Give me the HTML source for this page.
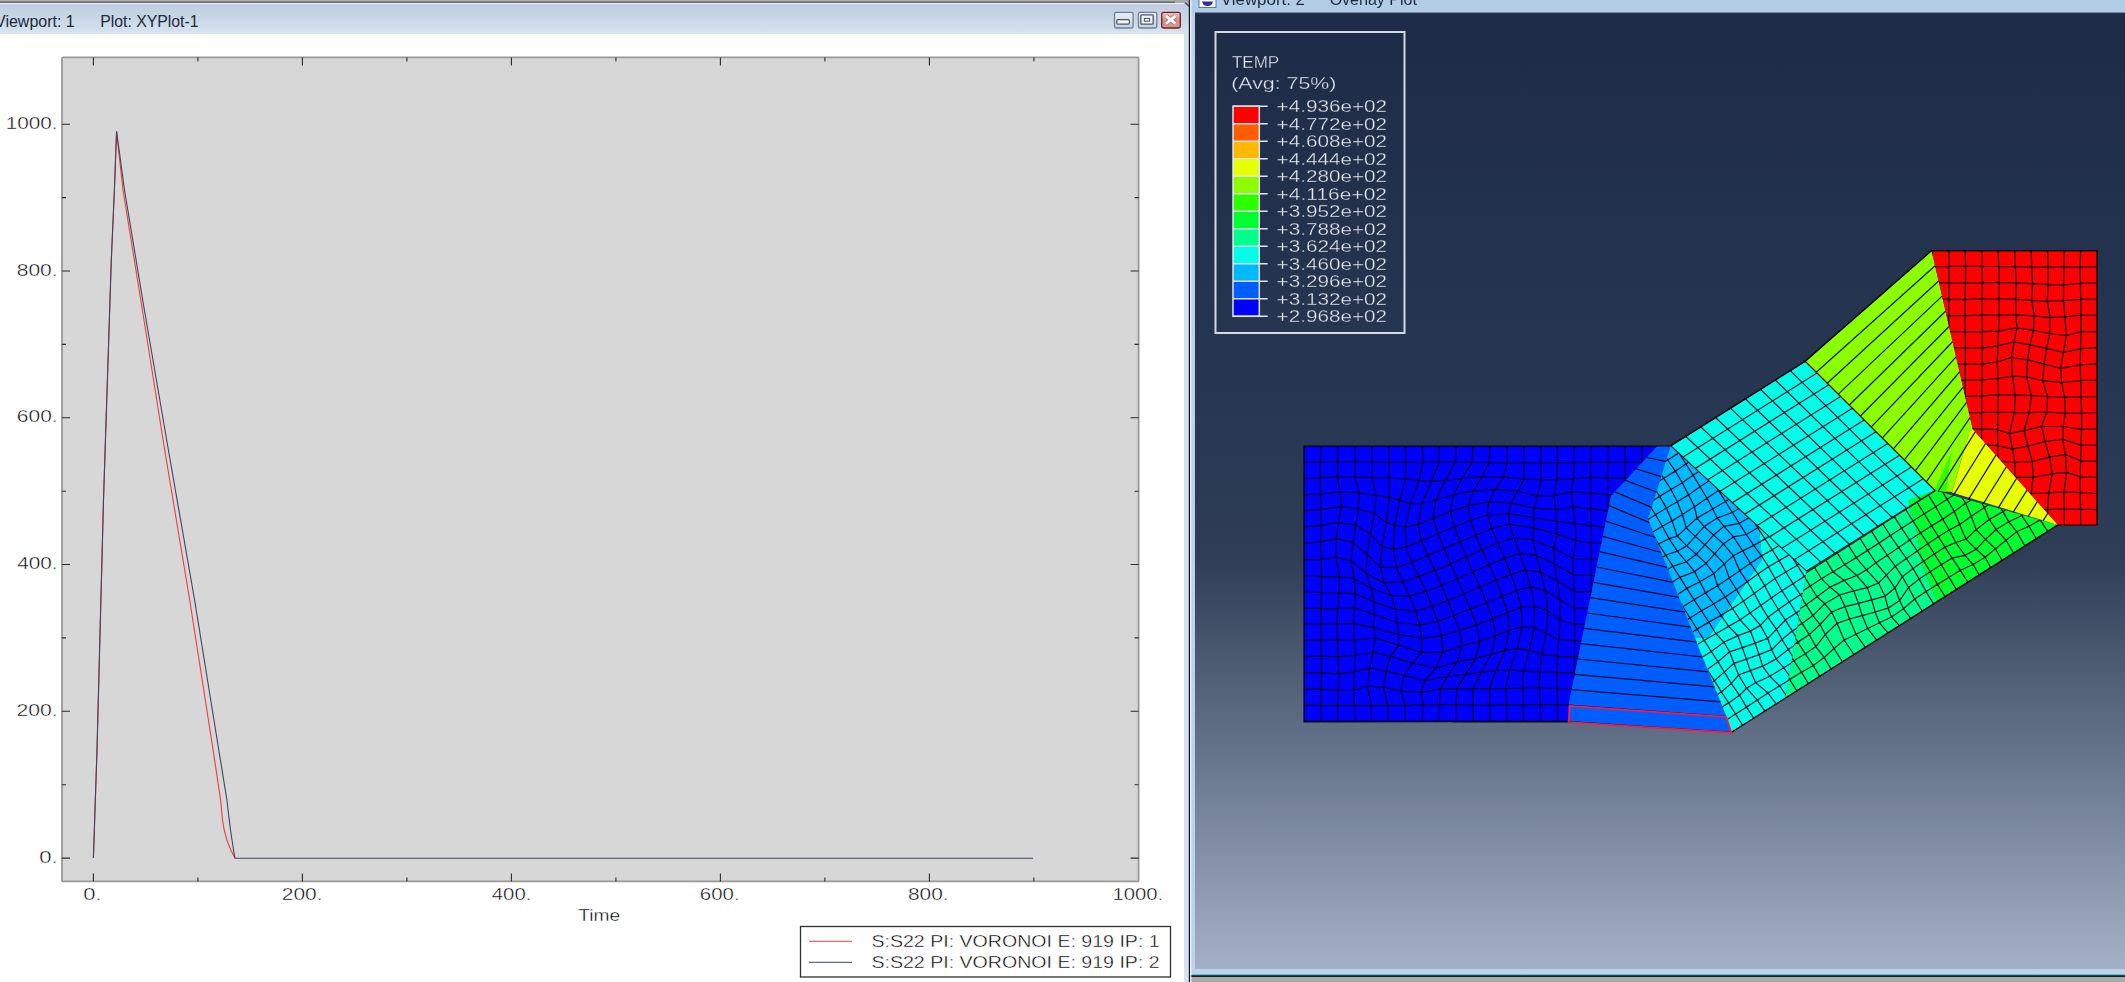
<!DOCTYPE html><html><head><meta charset="utf-8"><style>html,body{margin:0;padding:0;width:2125px;height:982px;overflow:hidden;background:#aaaaaa}svg{position:absolute;left:0;top:0}</style></head><body>
<svg width="2125" height="982" viewBox="0 0 2125 982" style="font-family:'Liberation Sans',sans-serif">
<defs>
<linearGradient id="tb1" gradientUnits="userSpaceOnUse" x1="0" y1="3" x2="0" y2="34"><stop offset="0" stop-color="#bfcde0"/><stop offset="0.5" stop-color="#c8d6e6"/><stop offset="1" stop-color="#d8e4f1"/></linearGradient>
<linearGradient id="vpg" gradientUnits="userSpaceOnUse" x1="0" y1="13" x2="0" y2="969">
<stop offset="0" stop-color="#1d2b46"/><stop offset="0.45" stop-color="#2a3953"/><stop offset="0.57" stop-color="#2f3d56"/><stop offset="1" stop-color="#a3b0c6"/></linearGradient>
<linearGradient id="btnb" x1="0" y1="0" x2="0" y2="1"><stop offset="0" stop-color="#e8eef6"/><stop offset="1" stop-color="#c4d2e2"/></linearGradient>
<linearGradient id="btnr" x1="0" y1="0" x2="0" y2="1"><stop offset="0" stop-color="#eec4c0"/><stop offset="0.5" stop-color="#d89088"/><stop offset="1" stop-color="#d6988e"/></linearGradient>
</defs>
<rect x="0" y="0" width="1190" height="982" fill="#ffffff"/>
<rect x="0" y="0" width="1190" height="3" fill="#b0b0b0"/><rect x="0" y="1.4" width="1186" height="1.6" fill="#686c72"/>
<rect x="1175" y="0" width="15" height="14" fill="#a8a8a8"/>
<path d="M0,3 H1185.5 L1189,6.5 V982 H0 Z" fill="url(#tb1)"/>
<rect x="0" y="3" width="1184" height="1" fill="#eaf0f4"/>
<rect x="1184" y="34" width="5" height="948" fill="#d6e2ef"/>
<rect x="0" y="34" width="1184" height="948" fill="#ffffff"/>
<path d="M1185.2,2.6 L1189,6.4" fill="none" stroke="#3a3f46" stroke-width="1.3"/>
<rect x="1188.8" y="0" width="1.4" height="982" fill="#1a1a1a"/>
<text x="-5" y="26.6" font-size="16" fill="#1e2a3a">Viewport: 1</text>
<text x="100.18" y="26.60" font-size="15.6" fill="#1e2a3a" textLength="98.40" lengthAdjust="spacingAndGlyphs">Plot: XYPlot-1</text>
<rect x="1114.5" y="12.3" width="18.6" height="15.7" rx="1.8" fill="url(#btnb)" stroke="#6f8096" stroke-width="1.3"/>
<rect x="1116.8" y="19.6" width="12.6" height="4.6" rx="1.2" fill="#f2f2f2" stroke="#4a5566" stroke-width="1.2"/>
<rect x="1138.4" y="12.3" width="18.4" height="15.7" rx="1.8" fill="url(#btnb)" stroke="#6f8096" stroke-width="1.3"/>
<rect x="1140.8" y="14.8" width="12.4" height="9.4" rx="1" fill="#f2f2f2" stroke="#4a5566" stroke-width="1.3"/>
<rect x="1144.4" y="18.4" width="5.2" height="2.8" fill="none" stroke="#4a5566" stroke-width="1"/>
<rect x="1161.7" y="12.3" width="18.6" height="15.7" rx="1.8" fill="url(#btnr)" stroke="#6a2424" stroke-width="1.3"/>
<path d="M1166,16 L1175.5,23.6 M1175.5,16 L1166,23.6" stroke="#5a2a2a" stroke-width="4.2" stroke-linecap="butt" opacity="0.45"/><path d="M1166,16 L1175.5,23.6 M1175.5,16 L1166,23.6" stroke="#fbf8f6" stroke-width="2.9" stroke-linecap="butt"/>
<rect x="62" y="57.4" width="1076.6" height="824.0" fill="#d7d7d7" stroke="#999999" stroke-width="1.8" rx="1"/>
<path d="M93.4,57.4 v8 M93.4,881.4 v-8 M197.9,57.4 v4 M197.9,881.4 v-4 M302.4,57.4 v8 M302.4,881.4 v-8 M406.9,57.4 v4 M406.9,881.4 v-4 M511.4,57.4 v8 M511.4,881.4 v-8 M615.9,57.4 v4 M615.9,881.4 v-4 M720.4,57.4 v8 M720.4,881.4 v-8 M824.9,57.4 v4 M824.9,881.4 v-4 M929.4,57.4 v8 M929.4,881.4 v-8 M1033.9,57.4 v4 M1033.9,881.4 v-4 M62,858.1 h8 M1138.6,858.1 h-8 M62,784.7 h4 M1138.6,784.7 h-4 M62,711.3 h8 M1138.6,711.3 h-8 M62,637.9 h4 M1138.6,637.9 h-4 M62,564.5 h8 M1138.6,564.5 h-8 M62,491.2 h4 M1138.6,491.2 h-4 M62,417.8 h8 M1138.6,417.8 h-8 M62,344.4 h4 M1138.6,344.4 h-4 M62,271.0 h8 M1138.6,271.0 h-8 M62,197.6 h4 M1138.6,197.6 h-4 M62,124.2 h8 M1138.6,124.2 h-8" stroke="#2a2a2a" stroke-width="1.1" fill="none"/>
<text x="83.30" y="899.80" font-size="17" fill="#000000" stroke="#ffffff" stroke-width="0.4" textLength="18.32" lengthAdjust="spacingAndGlyphs">0.</text>
<text x="39.18" y="862.70" font-size="17" fill="#000000" stroke="#ffffff" stroke-width="0.4" textLength="18.44" lengthAdjust="spacingAndGlyphs">0.</text>
<text x="281.74" y="899.80" font-size="17" fill="#000000" stroke="#ffffff" stroke-width="0.4" textLength="40.86" lengthAdjust="spacingAndGlyphs">200.</text>
<text x="16.40" y="715.92" font-size="17" fill="#000000" stroke="#ffffff" stroke-width="0.4" textLength="41.22" lengthAdjust="spacingAndGlyphs">200.</text>
<text x="491.76" y="899.80" font-size="17" fill="#000000" stroke="#ffffff" stroke-width="0.4" textLength="39.62" lengthAdjust="spacingAndGlyphs">400.</text>
<text x="17.20" y="569.14" font-size="17" fill="#000000" stroke="#ffffff" stroke-width="0.4" textLength="40.42" lengthAdjust="spacingAndGlyphs">400.</text>
<text x="699.86" y="899.80" font-size="17" fill="#000000" stroke="#ffffff" stroke-width="0.4" textLength="39.74" lengthAdjust="spacingAndGlyphs">600.</text>
<text x="16.86" y="422.36" font-size="17" fill="#000000" stroke="#ffffff" stroke-width="0.4" textLength="40.76" lengthAdjust="spacingAndGlyphs">600.</text>
<text x="907.96" y="899.80" font-size="17" fill="#000000" stroke="#ffffff" stroke-width="0.4" textLength="40.64" lengthAdjust="spacingAndGlyphs">800.</text>
<text x="16.74" y="275.58" font-size="17" fill="#000000" stroke="#ffffff" stroke-width="0.4" textLength="40.88" lengthAdjust="spacingAndGlyphs">800.</text>
<text x="1112.40" y="899.80" font-size="17" fill="#000000" stroke="#ffffff" stroke-width="0.4" textLength="50.76" lengthAdjust="spacingAndGlyphs">1000.</text>
<text x="5.72" y="128.80" font-size="17" fill="#000000" stroke="#ffffff" stroke-width="0.4" textLength="51.90" lengthAdjust="spacingAndGlyphs">1000.</text>
<text x="578.32" y="920.80" font-size="17" fill="#000000" stroke="#ffffff" stroke-width="0.4" textLength="41.82" lengthAdjust="spacingAndGlyphs">Time</text>
<path d="M93.4,858.1 L97,750 L103.5,500 L111.3,260 L114.4,190 L116.5,131.4 L123.0,190 L140.8,300 L164.7,450 L189.7,600 L213.1,750 L220.6,800 L222.5,820 L224.2,830 L226.9,840 L230.8,850 L234.8,857.8" fill="none" stroke="#f23a3a" stroke-width="1.1"/>
<path d="M93.4,858.1 L97,750 L103.5,500 L111.3,260 L114.4,190 L116.6,131.4 L124.5,190 L142.7,300 L168.4,450 L194.6,600 L218.8,750 L226.9,800 L230.5,830 L233.5,850 L235,858.2 L1033,858.2" fill="none" stroke="#3e4660" stroke-width="1.1"/>
<rect x="800.5" y="926.5" width="370" height="50.5" fill="#ffffff" stroke="#303030" stroke-width="1.3"/>
<path d="M809,941.3 H852" stroke="#ff6060" stroke-width="1.2"/>
<path d="M809,962.3 H852" stroke="#606a80" stroke-width="1.2"/>
<text x="871.40" y="946.80" font-size="17" fill="#000000" stroke="#ffffff" stroke-width="0.4" textLength="288.30" lengthAdjust="spacingAndGlyphs">S:S22 PI: VORONOI E: 919 IP: 1</text>
<text x="871.40" y="968.00" font-size="17" fill="#000000" stroke="#ffffff" stroke-width="0.4" textLength="288.30" lengthAdjust="spacingAndGlyphs">S:S22 PI: VORONOI E: 919 IP: 2</text>
<rect x="1190" y="0" width="935" height="982" fill="#bcd1ea"/>
<rect x="1190" y="0" width="935" height="13" fill="#b3cce5"/>
<rect x="1195" y="12.6" width="930" height="1.2" fill="#12203a"/>
<rect x="1195" y="13.4" width="930" height="955.6" fill="url(#vpg)"/>
<rect x="1190" y="974" width="935" height="1.2" fill="#5ec4d6"/>
<rect x="1190" y="975.2" width="935" height="1.8" fill="#0c2424"/>
<rect x="1190" y="977" width="935" height="5" fill="#aaaaaa"/>
<rect x="1190.2" y="0" width="1.2" height="982" fill="#eef4fa"/>
<defs><filter id="mblur" x="1195" y="13" width="930" height="956" filterUnits="userSpaceOnUse"><feGaussianBlur stdDeviation="0.45"/></filter><clipPath id="c1"><polygon points="1304.0,446.0 1657.5,446.0 1611.0,496.0 1568.6,705.0 1568.6,722.0 1304.0,722.0"/></clipPath><clipPath id="c2"><polygon points="1670.7,445.6 1806.6,571.1 1785.5,698.0 1731.5,732.4 1726.6,716.7 1648.0,519.0"/></clipPath><clipPath id="c3"><polygon points="1806.6,571.1 1935.0,490.5 2058.0,525.0 1785.5,698.0"/></clipPath><clipPath id="c4"><polygon points="1931.6,250.6 2097.2,250.5 2097.2,525.0 2058.0,525.0 1972.7,429.0"/></clipPath></defs><polygon points="1304.0,446.0 1657.5,446.0 1611.0,496.0 1568.6,705.0 1568.6,722.0 1304.0,722.0" fill="#0000ff"/>
<polygon points="1657.5,446.0 1670.7,446.0 1648.0,519.0 1726.6,716.7 1731.5,732.4 1568.6,721.6 1568.6,705.0 1611.0,496.0" fill="#005dff"/>
<polygon points="1670.7,445.6 1805.2,361.2 1935.0,490.5 1806.6,571.1 1785.5,698.0 1731.5,732.4 1726.6,716.7 1695.0,638.0 1708.0,638.0 1762.0,560.0 1759.0,528.0" fill="#00ffe8"/>
<polygon points="1670.7,445.6 1759.0,528.0 1762.0,560.0 1708.0,638.0 1695.0,638.0 1648.0,519.0" fill="#00b9ff"/>
<polygon points="1806.6,571.1 1935.0,490.5 1908.0,500.0 1916.0,527.0 1922.0,564.0 1937.0,602.0 1785.5,698.0" fill="#00ff8b"/>
<polygon points="1908.0,500.0 1935.0,490.5 2058.0,525.0 1937.0,602.0 1922.0,564.0 1916.0,527.0" fill="#00ff2e"/>
<polygon points="1804.6,361.8 1931.6,250.6 1972.7,429.0 1969.4,432.0 1952.0,492.0 1934.5,490.3" fill="#8bff00"/>
<polygon points="1972.7,429.0 2058.0,525.0 1952.0,492.5 1969.4,432.0" fill="#e8ff00"/>
<polygon points="1934.5,490.3 1951.5,452.0 1946.0,492.0" fill="#2eff00"/>
<polygon points="1931.6,250.6 2097.2,250.5 2097.2,525.0 2058.0,525.0 1972.7,429.0" fill="#ff0000"/>
<g filter="url(#mblur)">
<path d="M1670.7,445.6 L1806.6,571.1 M1685.6,436.2 L1820.9,562.1 M1700.6,426.8 L1835.1,553.2 M1715.5,417.5 L1849.4,544.2 M1730.5,408.1 L1863.7,535.3 M1745.4,398.7 L1877.9,526.3 M1760.4,389.3 L1892.2,517.4 M1775.3,380.0 L1906.5,508.4 M1790.3,370.6 L1920.7,499.5 M1805.2,361.2 L1935.0,490.5 M1670.7,445.6 L1805.2,361.2 M1683.1,457.0 L1817.0,373.0 M1695.4,468.4 L1828.8,384.7 M1707.8,479.8 L1840.6,396.5 M1720.1,491.2 L1852.4,408.2 M1732.5,502.6 L1864.2,420.0 M1744.8,514.1 L1876.0,431.7 M1757.2,525.5 L1887.8,443.5 M1769.5,536.9 L1899.6,455.2 M1781.9,548.3 L1911.4,467.0 M1794.2,559.7 L1923.2,478.7 M1806.6,571.1 L1935.0,490.5 M1646.8,457.5 L1665.9,461.3 M1636.2,468.9 L1661.2,476.7 M1625.5,480.4 L1656.4,492.0 M1614.9,491.8 L1651.6,507.4 M1609.0,505.7 L1649.4,522.6 M1605.9,521.1 L1655.4,537.5 M1602.8,536.4 L1661.3,552.5 M1599.7,551.7 L1667.2,567.4 M1596.6,567.0 L1673.2,582.3 M1593.5,582.4 L1679.1,597.3 M1590.4,597.7 L1685.0,612.2 M1587.3,613.0 L1691.0,627.1 M1584.1,628.4 L1696.9,642.1 M1581.0,643.7 L1702.9,657.0 M1577.9,659.0 L1708.8,671.9 M1574.8,674.3 L1714.7,686.8 M1571.7,689.7 L1720.7,701.8 M1568.6,705.0 L1726.6,716.7 M1804.6,361.8 L1931.6,250.6 M1815.7,372.7 L1935.1,265.8 M1826.7,383.7 L1938.6,281.0 M1837.8,394.6 L1942.1,296.1 M1848.8,405.5 L1945.6,311.3 M1859.9,416.5 L1949.1,326.5 M1870.9,427.4 L1952.6,341.7 M1882.0,438.4 L1956.1,356.8 M1893.0,449.3 L1959.6,372.0 M1904.1,460.2 L1963.1,387.2 M1915.1,471.2 L1966.6,402.4 M1926.2,482.1 L1970.1,417.5 M1938.2,491.3 L1975.2,431.9 M1953.2,495.6 L1985.6,443.5 M1968.2,499.8 L1995.9,455.1 M1983.1,504.0 L2006.3,466.8 M1998.1,508.2 L2016.6,478.4 M2013.1,512.4 L2027.0,490.1 M2028.1,516.6 L2037.3,501.7 M2043.0,520.8 L2047.7,513.4" stroke="#00001a" stroke-width="1.25" fill="none" opacity="0.9"/>
<g clip-path="url(#c1)"><path d="M1304.0,446.0 L1304.0,462.2 L1304.0,478.4 L1304.0,494.6 L1304.0,510.8 L1304.0,527.0 L1304.0,543.2 L1304.0,559.4 L1304.0,575.6 L1304.0,591.8 L1304.0,608.0 L1304.0,624.2 L1304.0,640.4 L1304.0,656.6 L1304.0,672.8 L1304.0,689.0 L1304.0,705.2 L1304.0,721.4 L1303.6,737.5 M1320.9,446.0 L1320.4,461.8 L1320.4,477.8 L1320.5,494.2 L1321.2,509.7 L1321.0,525.3 L1320.5,541.9 L1321.0,559.5 L1321.5,576.3 L1321.4,592.5 L1321.2,608.5 L1320.9,624.1 L1320.9,639.9 L1321.2,656.2 L1321.4,672.8 L1321.4,689.3 L1321.0,705.5 L1320.9,721.4 L1320.1,737.3 M1337.8,446.0 L1337.8,461.5 L1337.5,477.0 L1340.2,492.0 L1341.1,506.5 L1338.7,522.3 L1336.4,538.6 L1335.9,557.1 L1339.2,576.8 L1338.9,593.1 L1337.7,608.3 L1337.1,623.6 L1337.4,639.9 L1338.2,656.9 L1338.6,674.0 L1338.2,690.4 L1337.5,705.6 L1337.8,721.4 L1337.0,737.5 M1354.7,446.0 L1355.1,461.6 L1355.2,477.2 L1359.3,493.2 L1358.3,509.1 L1355.8,525.3 L1353.4,542.6 L1351.0,560.6 L1354.2,578.6 L1355.3,593.7 L1354.2,607.8 L1353.6,623.3 L1354.2,640.1 L1355.2,655.3 L1354.3,671.9 L1354.1,690.0 L1354.2,705.7 L1354.7,721.4 L1354.3,737.8 M1371.6,446.0 L1372.1,462.0 L1372.1,477.7 L1376.0,495.4 L1374.7,513.7 L1370.4,534.0 L1367.3,554.7 L1366.0,573.3 L1371.4,588.3 L1374.1,601.8 L1374.2,614.7 L1373.4,627.3 L1375.2,638.0 L1373.3,652.1 L1369.6,668.0 L1367.6,686.0 L1371.3,705.6 L1371.6,721.4 L1371.6,737.9 M1388.5,446.0 L1389.0,462.2 L1389.3,478.0 L1389.2,497.1 L1386.4,522.4 L1382.0,546.6 L1380.4,567.2 L1384.0,582.8 L1391.4,595.5 L1395.4,609.4 L1397.3,622.5 L1398.5,634.4 L1398.4,645.2 L1390.5,656.4 L1386.0,671.1 L1383.4,687.3 L1387.8,705.4 L1388.5,721.4 L1388.7,737.6 M1405.4,446.0 L1405.9,462.2 L1405.7,478.9 L1399.7,500.4 L1394.7,525.3 L1393.5,549.4 L1396.4,567.6 L1402.9,581.8 L1409.7,596.2 L1415.7,610.8 L1419.5,625.0 L1421.8,638.4 L1421.7,652.3 L1412.4,663.2 L1404.0,675.4 L1401.0,691.1 L1405.2,705.5 L1405.4,721.4 L1405.5,737.1 M1422.3,446.0 L1422.9,461.9 L1419.0,480.6 L1410.4,503.6 L1405.2,527.0 L1406.1,546.9 L1411.8,562.3 L1418.9,576.4 L1425.9,591.1 L1432.2,606.3 L1437.6,621.4 L1441.3,635.7 L1442.9,652.3 L1435.8,667.9 L1424.9,680.5 L1420.9,692.3 L1423.0,704.9 L1422.3,721.4 L1422.4,736.7 M1439.2,446.0 L1439.4,461.8 L1431.5,481.3 L1422.0,503.4 L1418.0,524.4 L1421.2,541.1 L1427.9,555.4 L1435.0,570.3 L1441.7,585.5 L1447.8,600.6 L1453.7,615.5 L1459.6,630.4 L1461.8,645.8 L1457.1,662.2 L1447.4,676.5 L1440.4,689.1 L1439.6,704.6 L1439.2,721.4 L1439.4,736.9 M1456.1,446.0 L1455.5,461.9 L1445.3,480.4 L1436.0,500.0 L1433.2,518.3 L1437.9,533.7 L1444.3,548.6 L1450.7,563.9 L1457.2,579.0 L1463.7,594.0 L1470.3,609.1 L1476.5,624.8 L1480.1,641.2 L1475.7,658.4 L1465.6,674.4 L1456.8,688.9 L1456.2,704.7 L1456.1,721.4 L1456.3,737.4 M1473.0,446.0 L1472.0,462.2 L1462.0,478.5 L1453.2,495.0 L1450.3,511.5 L1454.5,526.8 L1460.2,541.9 L1466.3,556.9 L1472.9,571.8 L1480.0,586.9 L1486.7,602.7 L1492.6,618.9 L1495.6,635.7 L1491.2,654.2 L1481.4,672.2 L1473.2,688.6 L1473.0,705.0 L1473.0,721.4 L1473.0,737.8 M1489.9,446.0 L1489.3,462.5 L1481.9,477.0 L1473.3,490.9 L1468.6,505.6 L1470.5,520.5 L1475.8,535.2 L1482.0,549.7 L1488.9,564.6 L1496.0,580.2 L1502.3,596.5 L1507.5,612.6 L1509.3,630.2 L1504.8,650.3 L1496.0,670.3 L1489.4,688.6 L1489.8,705.3 L1489.9,721.4 L1489.7,737.9 M1506.8,446.0 L1506.8,462.7 L1503.4,477.1 L1495.2,489.3 L1488.7,501.9 L1487.5,515.0 L1491.7,528.6 L1497.9,543.0 L1504.6,558.3 L1511.0,574.4 L1516.8,590.4 L1521.3,607.1 L1522.0,626.8 L1517.4,648.6 L1509.7,670.0 L1505.8,688.5 L1506.5,705.2 L1506.8,721.4 L1506.8,737.8 M1523.7,446.0 L1524.1,462.7 L1524.0,478.9 L1517.9,491.0 L1511.0,502.9 L1508.6,513.7 L1509.7,524.1 L1514.0,537.8 L1519.6,553.4 L1525.4,569.8 L1530.9,587.0 L1534.5,606.1 L1534.2,627.7 L1529.5,650.3 L1523.6,671.1 L1522.5,688.1 L1523.2,704.8 L1523.7,721.4 L1524.1,737.6 M1540.6,446.0 L1540.9,462.7 L1541.3,479.8 L1537.3,496.2 L1534.1,508.2 L1533.7,517.7 L1534.0,527.8 L1532.8,539.5 L1536.2,555.1 L1540.8,572.1 L1545.3,590.6 L1547.6,611.0 L1546.2,633.0 L1542.0,654.3 L1539.7,671.8 L1539.4,687.7 L1540.3,704.5 L1540.6,721.4 L1541.4,737.6 M1557.5,446.0 L1557.4,462.6 L1556.9,479.4 L1554.0,495.7 L1556.0,509.6 L1556.6,521.5 L1557.3,534.1 L1553.8,548.4 L1554.5,564.0 L1557.3,581.0 L1560.0,599.7 L1560.2,620.3 L1558.6,639.7 L1557.6,656.4 L1557.2,672.4 L1557.3,688.5 L1557.6,704.9 L1557.5,721.4 L1558.3,737.8 M1574.4,446.0 L1573.9,462.4 L1573.7,478.3 L1571.4,492.0 L1573.1,506.9 L1575.4,523.6 L1575.9,540.7 L1573.0,558.5 L1573.4,574.7 L1574.2,591.3 L1574.6,608.0 L1574.6,624.4 L1574.5,640.5 L1574.4,656.6 L1574.4,672.8 L1574.4,689.0 L1574.4,705.2 L1574.4,721.4 L1574.7,738.1 M1591.3,446.0 L1590.7,462.2 L1590.6,477.4 L1590.9,493.1 L1590.8,508.8 L1591.3,525.8 L1591.3,543.1 L1591.2,559.4 L1591.3,575.6 L1591.3,591.8 L1591.3,608.0 L1591.3,624.2 L1591.5,640.5 L1591.7,656.5 L1591.8,672.6 L1591.7,689.2 L1591.3,706.2 L1591.0,722.6 L1590.9,738.6 M1608.2,446.0 L1607.7,462.0 L1607.8,477.8 L1608.2,494.6 L1608.2,510.8 L1608.2,527.0 L1608.2,543.2 L1608.3,559.3 L1608.3,575.6 L1608.2,591.9 L1608.2,608.2 L1608.6,624.1 L1609.3,639.7 L1609.9,655.7 L1609.4,672.8 L1608.2,690.3 L1607.0,707.2 L1606.7,723.1 L1607.3,738.5 M1625.1,446.0 L1624.8,462.1 L1625.1,478.4 L1624.9,494.5 L1625.0,510.6 L1625.7,526.8 L1626.3,542.9 L1626.2,559.1 L1625.5,575.6 L1624.8,591.9 L1624.9,607.5 L1625.7,622.7 L1626.5,638.6 L1626.5,655.5 L1625.5,673.0 L1624.1,690.2 L1623.3,706.6 L1623.4,722.3 L1624.3,738.2 M1642.0,446.0 L1642.0,462.2 L1641.7,478.4 L1641.6,494.8 L1642.8,511.1 L1643.9,527.1 L1644.0,543.4 L1643.2,560.0 L1642.1,576.3 L1641.5,591.7 L1641.8,606.7 L1642.4,622.1 L1642.6,638.5 L1642.2,655.8 L1641.4,673.0 L1640.7,689.5 L1640.5,705.4 L1640.8,721.5 L1641.3,737.8 M1658.9,446.0 L1658.8,462.2 L1658.6,478.6 L1659.3,495.0 L1660.2,511.2 L1660.6,527.7 L1660.3,544.5 L1659.5,561.0 L1658.9,576.6 L1658.5,591.5 L1658.4,606.6 L1658.3,622.6 L1658.2,639.5 L1658.2,656.4 L1658.3,672.8 L1658.4,688.8 L1658.4,704.8 L1658.2,721.1 L1658.1,737.3 M1676.1,445.7 L1676.2,461.9 L1676.4,478.1 L1676.5,494.4 L1676.5,511.1 L1676.4,528.3 L1676.3,545.2 L1676.2,561.2 L1675.9,576.3 L1675.4,591.4 L1674.6,607.2 L1674.2,623.8 L1674.4,640.6 L1675.2,657.0 L1676.1,672.9 L1676.4,688.9 L1675.9,705.1 L1675.3,721.1 L1675.1,736.8 M1694.1,445.1 L1694.1,461.1 L1693.5,477.2 L1692.6,493.8 L1692.1,511.2 L1692.2,528.4 L1692.8,544.9 L1693.2,560.3 L1692.8,575.5 L1691.8,591.4 L1690.8,608.0 L1690.7,624.8 L1691.6,641.3 L1693.0,657.4 L1693.9,673.5 L1693.9,689.7 L1693.1,705.8 L1692.4,721.3 L1692.5,736.3 M1304.0,446.0 L1320.9,446.0 L1337.8,446.0 L1354.7,446.0 L1371.6,446.0 L1388.5,446.0 L1405.4,446.0 L1422.3,446.0 L1439.2,446.0 L1456.1,446.0 L1473.0,446.0 L1489.9,446.0 L1506.8,446.0 L1523.7,446.0 L1540.6,446.0 L1557.5,446.0 L1574.4,446.0 L1591.3,446.0 L1608.2,446.0 L1625.1,446.0 L1642.0,446.0 L1658.9,446.0 L1676.1,445.7 L1694.1,445.1 M1304.0,462.2 L1320.4,461.8 L1337.8,461.5 L1355.1,461.6 L1372.1,462.0 L1389.0,462.2 L1405.9,462.2 L1422.9,461.9 L1439.4,461.8 L1455.5,461.9 L1472.0,462.2 L1489.3,462.5 L1506.8,462.7 L1524.1,462.7 L1540.9,462.7 L1557.4,462.6 L1573.9,462.4 L1590.7,462.2 L1607.7,462.0 L1624.8,462.1 L1642.0,462.2 L1658.8,462.2 L1676.2,461.9 L1694.1,461.1 M1304.0,478.4 L1320.4,477.8 L1337.5,477.0 L1355.2,477.2 L1372.1,477.7 L1389.3,478.0 L1405.7,478.9 L1419.0,480.6 L1431.5,481.3 L1445.3,480.4 L1462.0,478.5 L1481.9,477.0 L1503.4,477.1 L1524.0,478.9 L1541.3,479.8 L1556.9,479.4 L1573.7,478.3 L1590.6,477.4 L1607.8,477.8 L1625.1,478.4 L1641.7,478.4 L1658.6,478.6 L1676.4,478.1 L1693.5,477.2 M1304.0,494.6 L1320.5,494.2 L1340.2,492.0 L1359.3,493.2 L1376.0,495.4 L1389.2,497.1 L1399.7,500.4 L1410.4,503.6 L1422.0,503.4 L1436.0,500.0 L1453.2,495.0 L1473.3,490.9 L1495.2,489.3 L1517.9,491.0 L1537.3,496.2 L1554.0,495.7 L1571.4,492.0 L1590.9,493.1 L1608.2,494.6 L1624.9,494.5 L1641.6,494.8 L1659.3,495.0 L1676.5,494.4 L1692.6,493.8 M1304.0,510.8 L1321.2,509.7 L1341.1,506.5 L1358.3,509.1 L1374.7,513.7 L1386.4,522.4 L1394.7,525.3 L1405.2,527.0 L1418.0,524.4 L1433.2,518.3 L1450.3,511.5 L1468.6,505.6 L1488.7,501.9 L1511.0,502.9 L1534.1,508.2 L1556.0,509.6 L1573.1,506.9 L1590.8,508.8 L1608.2,510.8 L1625.0,510.6 L1642.8,511.1 L1660.2,511.2 L1676.5,511.1 L1692.1,511.2 M1304.0,527.0 L1321.0,525.3 L1338.7,522.3 L1355.8,525.3 L1370.4,534.0 L1382.0,546.6 L1393.5,549.4 L1406.1,546.9 L1421.2,541.1 L1437.9,533.7 L1454.5,526.8 L1470.5,520.5 L1487.5,515.0 L1508.6,513.7 L1533.7,517.7 L1556.6,521.5 L1575.4,523.6 L1591.3,525.8 L1608.2,527.0 L1625.7,526.8 L1643.9,527.1 L1660.6,527.7 L1676.4,528.3 L1692.2,528.4 M1304.0,543.2 L1320.5,541.9 L1336.4,538.6 L1353.4,542.6 L1367.3,554.7 L1380.4,567.2 L1396.4,567.6 L1411.8,562.3 L1427.9,555.4 L1444.3,548.6 L1460.2,541.9 L1475.8,535.2 L1491.7,528.6 L1509.7,524.1 L1534.0,527.8 L1557.3,534.1 L1575.9,540.7 L1591.3,543.1 L1608.2,543.2 L1626.3,542.9 L1644.0,543.4 L1660.3,544.5 L1676.3,545.2 L1692.8,544.9 M1304.0,559.4 L1321.0,559.5 L1335.9,557.1 L1351.0,560.6 L1366.0,573.3 L1384.0,582.8 L1402.9,581.8 L1418.9,576.4 L1435.0,570.3 L1450.7,563.9 L1466.3,556.9 L1482.0,549.7 L1497.9,543.0 L1514.0,537.8 L1532.8,539.5 L1553.8,548.4 L1573.0,558.5 L1591.2,559.4 L1608.3,559.3 L1626.2,559.1 L1643.2,560.0 L1659.5,561.0 L1676.2,561.2 L1693.2,560.3 M1304.0,575.6 L1321.5,576.3 L1339.2,576.8 L1354.2,578.6 L1371.4,588.3 L1391.4,595.5 L1409.7,596.2 L1425.9,591.1 L1441.7,585.5 L1457.2,579.0 L1472.9,571.8 L1488.9,564.6 L1504.6,558.3 L1519.6,553.4 L1536.2,555.1 L1554.5,564.0 L1573.4,574.7 L1591.3,575.6 L1608.3,575.6 L1625.5,575.6 L1642.1,576.3 L1658.9,576.6 L1675.9,576.3 L1692.8,575.5 M1304.0,591.8 L1321.4,592.5 L1338.9,593.1 L1355.3,593.7 L1374.1,601.8 L1395.4,609.4 L1415.7,610.8 L1432.2,606.3 L1447.8,600.6 L1463.7,594.0 L1480.0,586.9 L1496.0,580.2 L1511.0,574.4 L1525.4,569.8 L1540.8,572.1 L1557.3,581.0 L1574.2,591.3 L1591.3,591.8 L1608.2,591.9 L1624.8,591.9 L1641.5,591.7 L1658.5,591.5 L1675.4,591.4 L1691.8,591.4 M1304.0,608.0 L1321.2,608.5 L1337.7,608.3 L1354.2,607.8 L1374.2,614.7 L1397.3,622.5 L1419.5,625.0 L1437.6,621.4 L1453.7,615.5 L1470.3,609.1 L1486.7,602.7 L1502.3,596.5 L1516.8,590.4 L1530.9,587.0 L1545.3,590.6 L1560.0,599.7 L1574.6,608.0 L1591.3,608.0 L1608.2,608.2 L1624.9,607.5 L1641.8,606.7 L1658.4,606.6 L1674.6,607.2 L1690.8,608.0 M1304.0,624.2 L1320.9,624.1 L1337.1,623.6 L1353.6,623.3 L1373.4,627.3 L1398.5,634.4 L1421.8,638.4 L1441.3,635.7 L1459.6,630.4 L1476.5,624.8 L1492.6,618.9 L1507.5,612.6 L1521.3,607.1 L1534.5,606.1 L1547.6,611.0 L1560.2,620.3 L1574.6,624.4 L1591.3,624.2 L1608.6,624.1 L1625.7,622.7 L1642.4,622.1 L1658.3,622.6 L1674.2,623.8 L1690.7,624.8 M1304.0,640.4 L1320.9,639.9 L1337.4,639.9 L1354.2,640.1 L1375.2,638.0 L1398.4,645.2 L1421.7,652.3 L1442.9,652.3 L1461.8,645.8 L1480.1,641.2 L1495.6,635.7 L1509.3,630.2 L1522.0,626.8 L1534.2,627.7 L1546.2,633.0 L1558.6,639.7 L1574.5,640.5 L1591.5,640.5 L1609.3,639.7 L1626.5,638.6 L1642.6,638.5 L1658.2,639.5 L1674.4,640.6 L1691.6,641.3 M1304.0,656.6 L1321.2,656.2 L1338.2,656.9 L1355.2,655.3 L1373.3,652.1 L1390.5,656.4 L1412.4,663.2 L1435.8,667.9 L1457.1,662.2 L1475.7,658.4 L1491.2,654.2 L1504.8,650.3 L1517.4,648.6 L1529.5,650.3 L1542.0,654.3 L1557.6,656.4 L1574.4,656.6 L1591.7,656.5 L1609.9,655.7 L1626.5,655.5 L1642.2,655.8 L1658.2,656.4 L1675.2,657.0 L1693.0,657.4 M1304.0,672.8 L1321.4,672.8 L1338.6,674.0 L1354.3,671.9 L1369.6,668.0 L1386.0,671.1 L1404.0,675.4 L1424.9,680.5 L1447.4,676.5 L1465.6,674.4 L1481.4,672.2 L1496.0,670.3 L1509.7,670.0 L1523.6,671.1 L1539.7,671.8 L1557.2,672.4 L1574.4,672.8 L1591.8,672.6 L1609.4,672.8 L1625.5,673.0 L1641.4,673.0 L1658.3,672.8 L1676.1,672.9 L1693.9,673.5 M1304.0,689.0 L1321.4,689.3 L1338.2,690.4 L1354.1,690.0 L1367.6,686.0 L1383.4,687.3 L1401.0,691.1 L1420.9,692.3 L1440.4,689.1 L1456.8,688.9 L1473.2,688.6 L1489.4,688.6 L1505.8,688.5 L1522.5,688.1 L1539.4,687.7 L1557.3,688.5 L1574.4,689.0 L1591.7,689.2 L1608.2,690.3 L1624.1,690.2 L1640.7,689.5 L1658.4,688.8 L1676.4,688.9 L1693.9,689.7 M1304.0,705.2 L1321.0,705.5 L1337.5,705.6 L1354.2,705.7 L1371.3,705.6 L1387.8,705.4 L1405.2,705.5 L1423.0,704.9 L1439.6,704.6 L1456.2,704.7 L1473.0,705.0 L1489.8,705.3 L1506.5,705.2 L1523.2,704.8 L1540.3,704.5 L1557.6,704.9 L1574.4,705.2 L1591.3,706.2 L1607.0,707.2 L1623.3,706.6 L1640.5,705.4 L1658.4,704.8 L1675.9,705.1 L1693.1,705.8 M1304.0,721.4 L1320.9,721.4 L1337.8,721.4 L1354.7,721.4 L1371.6,721.4 L1388.5,721.4 L1405.4,721.4 L1422.3,721.4 L1439.2,721.4 L1456.1,721.4 L1473.0,721.4 L1489.9,721.4 L1506.8,721.4 L1523.7,721.4 L1540.6,721.4 L1557.5,721.4 L1574.4,721.4 L1591.0,722.6 L1606.7,723.1 L1623.4,722.3 L1640.8,721.5 L1658.2,721.1 L1675.3,721.1 L1692.4,721.3 M1303.6,737.5 L1320.1,737.3 L1337.0,737.5 L1354.3,737.8 L1371.6,737.9 L1388.7,737.6 L1405.5,737.1 L1422.4,736.7 L1439.4,736.9 L1456.3,737.4 L1473.0,737.8 L1489.7,737.9 L1506.8,737.8 L1524.1,737.6 L1541.4,737.6 L1558.3,737.8 L1574.7,738.1 L1590.9,738.6 L1607.3,738.5 L1624.3,738.2 L1641.3,737.8 L1658.1,737.3 L1675.1,736.8 L1692.5,736.3" stroke="#00001a" stroke-width="1.25" fill="none" opacity="0.9"/></g>
<g clip-path="url(#c2)"><path d="M1726.6,750.6 L1720.2,739.2 L1713.9,727.4 L1707.5,715.6 L1700.5,704.7 L1692.9,694.4 L1685.5,684.0 L1678.2,672.7 L1670.7,661.3 L1662.6,650.2 L1654.5,639.3 L1647.4,627.9 L1641.3,616.0 L1635.4,604.4 L1628.9,593.8 L1621.9,583.9 L1615.1,573.7 L1608.5,562.6 L1601.6,551.1 L1593.8,539.9 L1585.3,528.9 L1577.2,517.5 L1569.9,505.6 L1563.3,493.8 M1738.2,743.7 L1731.5,732.4 L1724.4,721.3 L1717.5,709.9 L1710.6,698.6 L1703.4,687.7 L1696.2,676.8 L1689.0,665.6 L1681.8,654.2 L1674.1,642.8 L1666.1,631.8 L1658.7,620.4 L1652.5,608.6 L1646.6,596.9 L1640.3,586.2 L1633.3,576.3 L1626.2,566.1 L1619.4,555.1 L1612.5,543.6 L1604.9,532.3 L1596.5,521.3 L1588.2,510.1 L1580.8,498.4 L1574.2,486.7 M1749.5,736.7 L1742.6,725.3 L1735.6,714.0 L1728.6,702.9 L1721.4,691.9 L1714.3,680.7 L1707.2,669.6 L1700.1,658.5 L1693.0,647.3 L1685.9,636.1 L1678.5,624.9 L1671.1,613.6 L1664.2,602.0 L1657.7,590.3 L1651.2,579.1 L1644.3,568.8 L1637.1,558.7 L1630.1,547.7 L1623.2,536.1 L1615.9,524.6 L1607.8,513.6 L1599.5,502.5 L1591.9,491.0 L1585.3,479.3 M1760.7,729.7 L1753.8,718.2 L1746.5,707.1 L1739.6,695.3 L1731.3,683.4 L1724.3,672.1 L1718.0,661.7 L1711.2,651.5 L1704.2,640.3 L1697.1,629.1 L1690.0,618.0 L1682.9,606.8 L1675.8,595.7 L1668.7,584.4 L1661.7,573.1 L1654.7,562.0 L1647.6,551.2 L1640.5,540.2 L1633.6,528.7 L1626.8,517.1 L1619.2,505.9 L1611.1,494.8 L1603.4,483.4 L1596.7,471.8 M1772.0,722.5 L1764.9,711.1 L1757.3,700.1 L1746.6,688.2 L1738.6,675.0 L1734.0,663.3 L1729.6,651.8 L1723.9,642.2 L1715.9,633.7 L1708.9,622.1 L1701.5,610.8 L1694.0,599.7 L1686.8,588.4 L1679.9,577.3 L1672.9,566.3 L1665.7,555.2 L1658.6,544.0 L1651.5,532.9 L1644.4,521.7 L1637.6,510.3 L1630.7,498.5 L1622.9,487.4 L1615.2,476.0 L1608.3,464.5 M1783.1,715.2 L1776.1,704.0 L1768.0,693.0 L1755.6,682.7 L1750.3,670.6 L1746.4,659.1 L1742.3,647.6 L1737.9,635.7 L1728.6,626.4 L1721.0,615.4 L1713.6,604.0 L1705.6,592.9 L1699.8,581.8 L1694.6,571.6 L1686.4,561.8 L1677.3,551.2 L1669.1,538.6 L1662.3,526.2 L1655.5,514.7 L1648.5,503.5 L1641.9,491.9 L1634.9,480.3 L1627.1,469.0 L1619.9,457.4 M1794.3,707.8 L1787.2,697.0 L1779.7,685.8 L1769.8,676.3 L1762.6,666.2 L1759.1,654.6 L1755.1,643.2 L1750.4,631.1 L1740.1,619.8 L1732.4,608.4 L1725.2,596.9 L1717.5,585.8 L1713.9,573.5 L1706.0,563.3 L1696.3,554.2 L1686.7,545.9 L1677.3,536.2 L1672.1,520.9 L1666.4,508.0 L1659.6,496.4 L1652.6,485.2 L1646.2,473.7 L1639.0,462.2 L1631.5,450.7 M1805.4,700.1 L1797.9,689.5 L1791.3,678.7 L1783.8,667.8 L1776.1,658.9 L1771.7,649.7 L1767.7,638.4 L1760.4,625.4 L1750.0,613.0 L1743.5,601.0 L1736.4,589.5 L1729.2,578.0 L1724.3,563.9 L1714.6,553.8 L1704.8,544.8 L1695.3,536.4 L1686.2,527.9 L1682.4,514.5 L1677.3,501.8 L1671.0,489.5 L1663.7,478.2 L1656.9,467.0 L1650.3,455.7 L1642.8,444.2 M1816.7,692.5 L1808.9,681.7 L1801.8,671.2 L1795.3,660.5 L1788.2,649.4 L1782.0,639.5 L1776.5,629.3 L1767.9,617.2 L1760.7,605.4 L1754.2,593.4 L1747.3,581.8 L1739.7,570.8 L1733.2,555.7 L1723.4,543.9 L1713.6,535.0 L1704.2,526.6 L1697.0,518.1 L1694.5,506.8 L1688.5,494.9 L1682.3,482.7 L1675.4,471.1 L1667.7,460.0 L1661.0,448.9 L1653.9,437.7 M1828.1,685.5 L1820.6,674.4 L1812.8,663.6 L1806.0,652.9 L1799.3,642.2 L1792.3,631.1 L1785.4,620.1 L1778.4,609.5 L1771.3,598.0 L1764.7,585.8 L1758.0,574.1 L1750.5,563.3 L1742.7,550.9 L1733.5,536.8 L1724.0,526.3 L1717.2,518.0 L1712.7,509.0 L1707.0,498.3 L1700.0,486.7 L1693.1,475.2 L1685.9,464.0 L1678.9,452.9 L1671.8,441.7 L1664.9,430.9 M1839.6,678.7 L1832.5,667.6 L1824.7,656.8 L1817.1,645.6 L1810.4,634.7 L1803.4,624.0 L1796.3,612.9 L1789.2,602.0 L1781.9,590.7 L1775.0,578.5 L1768.5,566.7 L1761.5,555.9 L1753.8,545.4 L1746.3,534.5 L1739.2,523.3 L1732.4,512.5 L1725.4,501.5 L1718.4,490.4 L1711.3,479.2 L1704.2,468.1 L1697.3,456.8 L1690.6,445.6 L1683.6,434.7 L1676.1,424.0 M1851.1,672.0 L1844.3,660.9 L1836.7,650.2 L1828.8,639.1 L1821.4,627.8 L1814.6,616.8 L1807.5,605.9 L1800.4,594.7 L1793.0,583.7 L1785.8,572.0 L1779.1,560.6 L1772.2,549.8 L1765.0,538.9 L1757.8,527.8 L1750.8,516.7 L1743.7,505.5 L1736.7,494.4 L1729.6,483.6 L1722.2,472.5 L1715.0,460.7 L1708.3,448.8 L1701.9,437.6 L1694.9,427.2 L1687.1,416.6 M1862.5,665.2 L1856.0,654.1 L1848.4,643.5 L1840.3,632.6 L1832.6,621.3 L1825.3,610.2 L1818.4,599.2 L1811.4,587.8 L1804.4,576.4 L1797.3,565.3 L1790.3,554.2 L1783.2,543.0 L1776.3,531.7 L1769.2,520.5 L1762.1,509.2 L1755.1,498.0 L1748.3,487.2 L1741.0,476.6 L1733.1,465.3 L1725.4,453.2 L1718.6,441.1 L1712.2,429.9 L1705.6,419.5 L1698.3,409.1 M1873.7,658.0 L1867.3,646.9 L1859.9,636.5 L1851.7,625.9 L1843.6,614.7 L1836.1,603.6 L1828.9,592.8 L1821.9,581.6 L1815.2,569.7 L1808.0,558.3 L1801.1,546.6 L1794.8,535.2 L1788.4,524.3 L1781.4,513.5 L1773.9,502.3 L1766.6,491.0 L1759.6,480.2 L1752.1,469.5 L1744.1,458.2 L1736.1,446.1 L1729.0,433.8 L1722.7,422.5 L1716.4,412.1 L1709.5,401.7 M1884.6,650.5 L1878.3,639.5 L1871.0,629.1 L1862.9,618.7 L1854.6,607.8 L1847.0,596.6 L1839.9,585.8 L1832.7,575.2 L1825.4,563.7 L1818.2,551.7 L1811.9,539.5 L1806.2,528.0 L1800.1,517.5 L1793.0,507.0 L1785.3,495.9 L1777.8,484.5 L1770.5,473.5 L1763.1,462.7 L1755.1,451.4 L1747.0,439.3 L1739.6,426.9 L1733.3,415.4 L1727.3,404.9 L1720.9,394.6 M1726.6,750.6 L1738.2,743.7 L1749.5,736.7 L1760.7,729.7 L1772.0,722.5 L1783.1,715.2 L1794.3,707.8 L1805.4,700.1 L1816.7,692.5 L1828.1,685.5 L1839.6,678.7 L1851.1,672.0 L1862.5,665.2 L1873.7,658.0 L1884.6,650.5 M1720.2,739.2 L1731.5,732.4 L1742.6,725.3 L1753.8,718.2 L1764.9,711.1 L1776.1,704.0 L1787.2,697.0 L1797.9,689.5 L1808.9,681.7 L1820.6,674.4 L1832.5,667.6 L1844.3,660.9 L1856.0,654.1 L1867.3,646.9 L1878.3,639.5 M1713.9,727.4 L1724.4,721.3 L1735.6,714.0 L1746.5,707.1 L1757.3,700.1 L1768.0,693.0 L1779.7,685.8 L1791.3,678.7 L1801.8,671.2 L1812.8,663.6 L1824.7,656.8 L1836.7,650.2 L1848.4,643.5 L1859.9,636.5 L1871.0,629.1 M1707.5,715.6 L1717.5,709.9 L1728.6,702.9 L1739.6,695.3 L1746.6,688.2 L1755.6,682.7 L1769.8,676.3 L1783.8,667.8 L1795.3,660.5 L1806.0,652.9 L1817.1,645.6 L1828.8,639.1 L1840.3,632.6 L1851.7,625.9 L1862.9,618.7 M1700.5,704.7 L1710.6,698.6 L1721.4,691.9 L1731.3,683.4 L1738.6,675.0 L1750.3,670.6 L1762.6,666.2 L1776.1,658.9 L1788.2,649.4 L1799.3,642.2 L1810.4,634.7 L1821.4,627.8 L1832.6,621.3 L1843.6,614.7 L1854.6,607.8 M1692.9,694.4 L1703.4,687.7 L1714.3,680.7 L1724.3,672.1 L1734.0,663.3 L1746.4,659.1 L1759.1,654.6 L1771.7,649.7 L1782.0,639.5 L1792.3,631.1 L1803.4,624.0 L1814.6,616.8 L1825.3,610.2 L1836.1,603.6 L1847.0,596.6 M1685.5,684.0 L1696.2,676.8 L1707.2,669.6 L1718.0,661.7 L1729.6,651.8 L1742.3,647.6 L1755.1,643.2 L1767.7,638.4 L1776.5,629.3 L1785.4,620.1 L1796.3,612.9 L1807.5,605.9 L1818.4,599.2 L1828.9,592.8 L1839.9,585.8 M1678.2,672.7 L1689.0,665.6 L1700.1,658.5 L1711.2,651.5 L1723.9,642.2 L1737.9,635.7 L1750.4,631.1 L1760.4,625.4 L1767.9,617.2 L1778.4,609.5 L1789.2,602.0 L1800.4,594.7 L1811.4,587.8 L1821.9,581.6 L1832.7,575.2 M1670.7,661.3 L1681.8,654.2 L1693.0,647.3 L1704.2,640.3 L1715.9,633.7 L1728.6,626.4 L1740.1,619.8 L1750.0,613.0 L1760.7,605.4 L1771.3,598.0 L1781.9,590.7 L1793.0,583.7 L1804.4,576.4 L1815.2,569.7 L1825.4,563.7 M1662.6,650.2 L1674.1,642.8 L1685.9,636.1 L1697.1,629.1 L1708.9,622.1 L1721.0,615.4 L1732.4,608.4 L1743.5,601.0 L1754.2,593.4 L1764.7,585.8 L1775.0,578.5 L1785.8,572.0 L1797.3,565.3 L1808.0,558.3 L1818.2,551.7 M1654.5,639.3 L1666.1,631.8 L1678.5,624.9 L1690.0,618.0 L1701.5,610.8 L1713.6,604.0 L1725.2,596.9 L1736.4,589.5 L1747.3,581.8 L1758.0,574.1 L1768.5,566.7 L1779.1,560.6 L1790.3,554.2 L1801.1,546.6 L1811.9,539.5 M1647.4,627.9 L1658.7,620.4 L1671.1,613.6 L1682.9,606.8 L1694.0,599.7 L1705.6,592.9 L1717.5,585.8 L1729.2,578.0 L1739.7,570.8 L1750.5,563.3 L1761.5,555.9 L1772.2,549.8 L1783.2,543.0 L1794.8,535.2 L1806.2,528.0 M1641.3,616.0 L1652.5,608.6 L1664.2,602.0 L1675.8,595.7 L1686.8,588.4 L1699.8,581.8 L1713.9,573.5 L1724.3,563.9 L1733.2,555.7 L1742.7,550.9 L1753.8,545.4 L1765.0,538.9 L1776.3,531.7 L1788.4,524.3 L1800.1,517.5 M1635.4,604.4 L1646.6,596.9 L1657.7,590.3 L1668.7,584.4 L1679.9,577.3 L1694.6,571.6 L1706.0,563.3 L1714.6,553.8 L1723.4,543.9 L1733.5,536.8 L1746.3,534.5 L1757.8,527.8 L1769.2,520.5 L1781.4,513.5 L1793.0,507.0 M1628.9,593.8 L1640.3,586.2 L1651.2,579.1 L1661.7,573.1 L1672.9,566.3 L1686.4,561.8 L1696.3,554.2 L1704.8,544.8 L1713.6,535.0 L1724.0,526.3 L1739.2,523.3 L1750.8,516.7 L1762.1,509.2 L1773.9,502.3 L1785.3,495.9 M1621.9,583.9 L1633.3,576.3 L1644.3,568.8 L1654.7,562.0 L1665.7,555.2 L1677.3,551.2 L1686.7,545.9 L1695.3,536.4 L1704.2,526.6 L1717.2,518.0 L1732.4,512.5 L1743.7,505.5 L1755.1,498.0 L1766.6,491.0 L1777.8,484.5 M1615.1,573.7 L1626.2,566.1 L1637.1,558.7 L1647.6,551.2 L1658.6,544.0 L1669.1,538.6 L1677.3,536.2 L1686.2,527.9 L1697.0,518.1 L1712.7,509.0 L1725.4,501.5 L1736.7,494.4 L1748.3,487.2 L1759.6,480.2 L1770.5,473.5 M1608.5,562.6 L1619.4,555.1 L1630.1,547.7 L1640.5,540.2 L1651.5,532.9 L1662.3,526.2 L1672.1,520.9 L1682.4,514.5 L1694.5,506.8 L1707.0,498.3 L1718.4,490.4 L1729.6,483.6 L1741.0,476.6 L1752.1,469.5 L1763.1,462.7 M1601.6,551.1 L1612.5,543.6 L1623.2,536.1 L1633.6,528.7 L1644.4,521.7 L1655.5,514.7 L1666.4,508.0 L1677.3,501.8 L1688.5,494.9 L1700.0,486.7 L1711.3,479.2 L1722.2,472.5 L1733.1,465.3 L1744.1,458.2 L1755.1,451.4 M1593.8,539.9 L1604.9,532.3 L1615.9,524.6 L1626.8,517.1 L1637.6,510.3 L1648.5,503.5 L1659.6,496.4 L1671.0,489.5 L1682.3,482.7 L1693.1,475.2 L1704.2,468.1 L1715.0,460.7 L1725.4,453.2 L1736.1,446.1 L1747.0,439.3 M1585.3,528.9 L1596.5,521.3 L1607.8,513.6 L1619.2,505.9 L1630.7,498.5 L1641.9,491.9 L1652.6,485.2 L1663.7,478.2 L1675.4,471.1 L1685.9,464.0 L1697.3,456.8 L1708.3,448.8 L1718.6,441.1 L1729.0,433.8 L1739.6,426.9 M1577.2,517.5 L1588.2,510.1 L1599.5,502.5 L1611.1,494.8 L1622.9,487.4 L1634.9,480.3 L1646.2,473.7 L1656.9,467.0 L1667.7,460.0 L1678.9,452.9 L1690.6,445.6 L1701.9,437.6 L1712.2,429.9 L1722.7,422.5 L1733.3,415.4 M1569.9,505.6 L1580.8,498.4 L1591.9,491.0 L1603.4,483.4 L1615.2,476.0 L1627.1,469.0 L1639.0,462.2 L1650.3,455.7 L1661.0,448.9 L1671.8,441.7 L1683.6,434.7 L1694.9,427.2 L1705.6,419.5 L1716.4,412.1 L1727.3,404.9 M1563.3,493.8 L1574.2,486.7 L1585.3,479.3 L1596.7,471.8 L1608.3,464.5 L1619.9,457.4 L1631.5,450.7 L1642.8,444.2 L1653.9,437.7 L1664.9,430.9 L1676.1,424.0 L1687.1,416.6 L1698.3,409.1 L1709.5,401.7 L1720.9,394.6" stroke="#00001a" stroke-width="1.25" fill="none" opacity="0.9"/></g>
<g clip-path="url(#c3)"><path d="M1788.5,729.9 L1781.3,717.2 L1774.0,705.3 L1766.1,693.9 L1757.9,682.4 L1751.1,670.5 L1745.0,658.7 L1738.8,647.5 L1731.8,637.1 L1724.3,626.4 L1717.1,614.7 L1710.1,602.3 M1799.7,722.8 L1792.7,709.9 L1785.5,698.0 L1778.2,686.6 L1770.4,675.4 L1762.8,663.9 L1756.4,652.0 L1750.0,640.8 L1743.0,630.3 L1735.4,619.7 L1728.0,608.0 L1721.0,595.5 M1811.1,715.3 L1804.2,702.5 L1796.9,690.8 L1789.6,679.4 L1782.4,668.0 L1774.8,656.7 L1767.6,645.2 L1761.0,634.0 L1753.9,623.4 L1746.3,612.9 L1738.7,601.3 L1731.8,588.8 M1822.7,707.6 L1815.8,695.1 L1808.3,683.5 L1801.5,672.2 L1793.8,660.7 L1786.5,649.3 L1779.0,638.0 L1771.9,626.8 L1764.7,616.2 L1757.1,605.8 L1749.6,594.4 L1742.7,582.0 M1834.4,699.9 L1828.4,687.8 L1819.7,676.3 L1813.3,665.6 L1805.3,653.8 L1797.9,642.1 L1790.6,630.7 L1783.0,619.3 L1775.6,608.6 L1768.1,598.3 L1760.6,587.0 L1753.8,574.8 M1846.6,692.1 L1839.7,679.7 L1831.1,669.0 L1824.1,657.4 L1815.9,646.6 L1809.3,634.6 L1802.1,623.4 L1794.8,612.0 L1787.1,600.8 L1779.5,590.3 L1771.9,579.4 L1765.1,567.2 M1857.7,685.1 L1850.4,672.0 L1842.5,661.8 L1834.0,648.5 L1825.3,634.5 L1820.1,624.5 L1812.9,615.6 L1806.2,604.8 L1799.0,593.4 L1791.3,582.2 L1783.7,571.3 L1776.6,559.5 M1869.0,678.3 L1861.0,665.8 L1853.9,654.5 L1844.2,640.0 L1837.0,623.3 L1831.7,612.0 L1824.8,603.8 L1817.0,596.8 L1810.3,586.1 L1803.1,574.7 L1795.6,563.5 L1788.2,551.8 M1880.1,671.5 L1871.0,659.2 L1865.3,647.3 L1856.0,634.2 L1849.5,619.0 L1845.1,606.7 L1839.5,595.0 L1830.1,587.1 L1821.4,578.7 L1814.5,567.5 L1807.2,556.2 L1799.8,544.5 M1891.1,664.5 L1881.7,652.8 L1876.7,640.0 L1867.7,628.5 L1862.2,615.6 L1858.4,603.4 L1853.8,590.9 L1844.3,580.4 L1833.0,571.7 L1825.9,560.2 L1818.7,549.0 L1811.2,537.4 M1902.0,657.1 L1893.5,646.0 L1888.0,632.8 L1879.5,622.8 L1875.1,612.0 L1871.8,599.9 L1867.3,587.6 L1856.7,575.5 L1844.6,564.7 L1837.3,553.0 L1830.2,541.9 L1822.6,530.6 M1913.0,649.4 L1905.7,638.1 L1899.4,625.5 L1891.5,617.0 L1888.0,608.1 L1885.0,596.1 L1878.6,583.0 L1866.5,569.9 L1856.2,557.6 L1848.7,545.7 L1841.6,534.8 L1833.8,523.8 M1924.3,641.5 L1917.5,629.8 L1910.8,618.3 L1903.5,608.8 L1899.7,600.5 L1895.0,588.1 L1886.4,575.1 L1875.9,562.8 L1867.6,550.4 L1860.1,538.5 L1852.9,527.6 L1845.0,516.8 M1935.7,633.6 L1929.1,622.3 L1922.2,611.0 L1914.7,599.1 L1908.5,587.5 L1902.3,576.7 L1895.2,566.2 L1887.4,555.3 L1879.0,543.1 L1871.5,531.2 L1864.2,520.2 L1856.3,509.4 M1947.5,626.1 L1940.7,615.0 L1933.6,603.8 L1926.1,591.6 L1919.2,579.1 L1913.1,568.6 L1906.4,558.5 L1898.7,547.6 L1890.3,535.6 L1882.9,524.0 L1875.5,512.7 L1867.8,501.6 M1959.4,618.9 L1952.3,607.7 L1945.0,596.5 L1937.5,584.4 L1930.2,571.7 L1923.8,561.1 L1917.2,550.9 L1909.7,540.1 L1901.6,528.2 L1894.3,516.7 L1886.9,505.2 L1879.5,493.8 M1971.3,612.0 L1963.9,600.6 L1956.4,589.3 L1949.0,577.3 L1941.2,564.7 L1934.4,553.9 L1927.8,543.7 L1920.6,532.8 L1912.9,520.9 L1905.7,509.5 L1898.4,497.8 L1891.4,486.0 M1983.1,605.1 L1975.5,593.5 L1967.8,582.0 L1960.4,570.3 L1952.1,558.1 L1945.0,547.1 L1938.4,536.7 L1931.6,525.9 L1924.3,513.8 L1917.1,502.3 L1909.9,490.5 L1903.3,478.5 M1994.7,598.0 L1986.9,586.3 L1979.2,574.8 L1973.1,564.5 L1964.9,555.3 L1955.8,542.5 L1949.2,530.0 L1942.7,519.1 L1935.7,506.8 L1928.5,495.0 L1921.4,483.3 L1915.2,471.4 M2006.0,590.5 L1998.8,578.9 L1990.6,567.5 L1985.1,557.2 L1976.2,549.3 L1965.9,539.2 L1959.7,524.4 L1954.2,511.4 L1947.1,499.2 L1939.8,487.8 L1933.0,476.2 L1926.8,464.5 M2017.1,582.8 L2010.7,570.9 L2002.0,560.3 L1995.5,548.8 L1985.5,539.4 L1976.1,529.7 L1971.3,516.2 L1965.7,503.3 L1958.5,492.0 L1951.6,480.9 L1944.8,469.1 L1938.2,457.6 M2028.1,575.0 L2021.5,563.1 L2013.4,553.0 L2006.1,540.3 L1996.1,529.5 L1989.2,519.4 L1984.4,507.4 L1977.1,496.2 L1970.2,485.6 L1963.4,474.1 L1956.2,461.9 L1949.2,450.4 M2039.1,567.3 L2032.1,556.2 L2024.8,545.8 L2016.7,531.7 L2008.8,521.8 L2003.0,511.6 L1995.5,500.2 L1988.4,489.5 L1981.8,478.8 L1974.7,466.7 L1967.2,454.4 L1960.0,442.8 M2050.2,559.9 L2043.3,549.2 L2036.2,538.5 L2028.9,526.2 L2021.7,515.7 L2014.3,504.1 L2006.8,492.8 L1999.7,482.3 L1993.0,471.1 L1985.8,459.0 L1978.1,446.6 L1970.6,435.0 M2061.5,553.0 L2054.7,542.0 L2047.6,531.3 L2040.3,519.9 L2033.4,508.3 L2026.2,496.5 L2018.3,485.3 L2010.9,474.6 L2003.9,463.5 L1996.7,451.3 L1988.9,438.8 L1981.4,427.1 M2073.1,546.3 L2066.2,534.9 L2059.0,524.0 L2052.2,512.5 L2045.8,501.0 L2038.4,489.3 L2030.0,478.1 L2022.1,467.3 L2014.8,456.1 L2007.6,443.9 L1999.9,431.4 L1992.4,419.5 M2084.7,539.5 L2077.7,527.6 L2070.7,516.5 L2064.3,505.4 L2057.9,494.3 L2050.0,482.7 L2041.4,471.3 L2033.2,460.3 L2025.7,449.0 L2018.6,436.9 L2011.1,424.2 L2003.7,412.2 M1788.5,729.9 L1799.7,722.8 L1811.1,715.3 L1822.7,707.6 L1834.4,699.9 L1846.6,692.1 L1857.7,685.1 L1869.0,678.3 L1880.1,671.5 L1891.1,664.5 L1902.0,657.1 L1913.0,649.4 L1924.3,641.5 L1935.7,633.6 L1947.5,626.1 L1959.4,618.9 L1971.3,612.0 L1983.1,605.1 L1994.7,598.0 L2006.0,590.5 L2017.1,582.8 L2028.1,575.0 L2039.1,567.3 L2050.2,559.9 L2061.5,553.0 L2073.1,546.3 L2084.7,539.5 M1781.3,717.2 L1792.7,709.9 L1804.2,702.5 L1815.8,695.1 L1828.4,687.8 L1839.7,679.7 L1850.4,672.0 L1861.0,665.8 L1871.0,659.2 L1881.7,652.8 L1893.5,646.0 L1905.7,638.1 L1917.5,629.8 L1929.1,622.3 L1940.7,615.0 L1952.3,607.7 L1963.9,600.6 L1975.5,593.5 L1986.9,586.3 L1998.8,578.9 L2010.7,570.9 L2021.5,563.1 L2032.1,556.2 L2043.3,549.2 L2054.7,542.0 L2066.2,534.9 L2077.7,527.6 M1774.0,705.3 L1785.5,698.0 L1796.9,690.8 L1808.3,683.5 L1819.7,676.3 L1831.1,669.0 L1842.5,661.8 L1853.9,654.5 L1865.3,647.3 L1876.7,640.0 L1888.0,632.8 L1899.4,625.5 L1910.8,618.3 L1922.2,611.0 L1933.6,603.8 L1945.0,596.5 L1956.4,589.3 L1967.8,582.0 L1979.2,574.8 L1990.6,567.5 L2002.0,560.3 L2013.4,553.0 L2024.8,545.8 L2036.2,538.5 L2047.6,531.3 L2059.0,524.0 L2070.7,516.5 M1766.1,693.9 L1778.2,686.6 L1789.6,679.4 L1801.5,672.2 L1813.3,665.6 L1824.1,657.4 L1834.0,648.5 L1844.2,640.0 L1856.0,634.2 L1867.7,628.5 L1879.5,622.8 L1891.5,617.0 L1903.5,608.8 L1914.7,599.1 L1926.1,591.6 L1937.5,584.4 L1949.0,577.3 L1960.4,570.3 L1973.1,564.5 L1985.1,557.2 L1995.5,548.8 L2006.1,540.3 L2016.7,531.7 L2028.9,526.2 L2040.3,519.9 L2052.2,512.5 L2064.3,505.4 M1757.9,682.4 L1770.4,675.4 L1782.4,668.0 L1793.8,660.7 L1805.3,653.8 L1815.9,646.6 L1825.3,634.5 L1837.0,623.3 L1849.5,619.0 L1862.2,615.6 L1875.1,612.0 L1888.0,608.1 L1899.7,600.5 L1908.5,587.5 L1919.2,579.1 L1930.2,571.7 L1941.2,564.7 L1952.1,558.1 L1964.9,555.3 L1976.2,549.3 L1985.5,539.4 L1996.1,529.5 L2008.8,521.8 L2021.7,515.7 L2033.4,508.3 L2045.8,501.0 L2057.9,494.3 M1751.1,670.5 L1762.8,663.9 L1774.8,656.7 L1786.5,649.3 L1797.9,642.1 L1809.3,634.6 L1820.1,624.5 L1831.7,612.0 L1845.1,606.7 L1858.4,603.4 L1871.8,599.9 L1885.0,596.1 L1895.0,588.1 L1902.3,576.7 L1913.1,568.6 L1923.8,561.1 L1934.4,553.9 L1945.0,547.1 L1955.8,542.5 L1965.9,539.2 L1976.1,529.7 L1989.2,519.4 L2003.0,511.6 L2014.3,504.1 L2026.2,496.5 L2038.4,489.3 L2050.0,482.7 M1745.0,658.7 L1756.4,652.0 L1767.6,645.2 L1779.0,638.0 L1790.6,630.7 L1802.1,623.4 L1812.9,615.6 L1824.8,603.8 L1839.5,595.0 L1853.8,590.9 L1867.3,587.6 L1878.6,583.0 L1886.4,575.1 L1895.2,566.2 L1906.4,558.5 L1917.2,550.9 L1927.8,543.7 L1938.4,536.7 L1949.2,530.0 L1959.7,524.4 L1971.3,516.2 L1984.4,507.4 L1995.5,500.2 L2006.8,492.8 L2018.3,485.3 L2030.0,478.1 L2041.4,471.3 M1738.8,647.5 L1750.0,640.8 L1761.0,634.0 L1771.9,626.8 L1783.0,619.3 L1794.8,612.0 L1806.2,604.8 L1817.0,596.8 L1830.1,587.1 L1844.3,580.4 L1856.7,575.5 L1866.5,569.9 L1875.9,562.8 L1887.4,555.3 L1898.7,547.6 L1909.7,540.1 L1920.6,532.8 L1931.6,525.9 L1942.7,519.1 L1954.2,511.4 L1965.7,503.3 L1977.1,496.2 L1988.4,489.5 L1999.7,482.3 L2010.9,474.6 L2022.1,467.3 L2033.2,460.3 M1731.8,637.1 L1743.0,630.3 L1753.9,623.4 L1764.7,616.2 L1775.6,608.6 L1787.1,600.8 L1799.0,593.4 L1810.3,586.1 L1821.4,578.7 L1833.0,571.7 L1844.6,564.7 L1856.2,557.6 L1867.6,550.4 L1879.0,543.1 L1890.3,535.6 L1901.6,528.2 L1912.9,520.9 L1924.3,513.8 L1935.7,506.8 L1947.1,499.2 L1958.5,492.0 L1970.2,485.6 L1981.8,478.8 L1993.0,471.1 L2003.9,463.5 L2014.8,456.1 L2025.7,449.0 M1724.3,626.4 L1735.4,619.7 L1746.3,612.9 L1757.1,605.8 L1768.1,598.3 L1779.5,590.3 L1791.3,582.2 L1803.1,574.7 L1814.5,567.5 L1825.9,560.2 L1837.3,553.0 L1848.7,545.7 L1860.1,538.5 L1871.5,531.2 L1882.9,524.0 L1894.3,516.7 L1905.7,509.5 L1917.1,502.3 L1928.5,495.0 L1939.8,487.8 L1951.6,480.9 L1963.4,474.1 L1974.7,466.7 L1985.8,459.0 L1996.7,451.3 L2007.6,443.9 L2018.6,436.9 M1717.1,614.7 L1728.0,608.0 L1738.7,601.3 L1749.6,594.4 L1760.6,587.0 L1771.9,579.4 L1783.7,571.3 L1795.6,563.5 L1807.2,556.2 L1818.7,549.0 L1830.2,541.9 L1841.6,534.8 L1852.9,527.6 L1864.2,520.2 L1875.5,512.7 L1886.9,505.2 L1898.4,497.8 L1909.9,490.5 L1921.4,483.3 L1933.0,476.2 L1944.8,469.1 L1956.2,461.9 L1967.2,454.4 L1978.1,446.6 L1988.9,438.8 L1999.9,431.4 L2011.1,424.2 M1710.1,602.3 L1721.0,595.5 L1731.8,588.8 L1742.7,582.0 L1753.8,574.8 L1765.1,567.2 L1776.6,559.5 L1788.2,551.8 L1799.8,544.5 L1811.2,537.4 L1822.6,530.6 L1833.8,523.8 L1845.0,516.8 L1856.3,509.4 L1867.8,501.6 L1879.5,493.8 L1891.4,486.0 L1903.3,478.5 L1915.2,471.4 L1926.8,464.5 L1938.2,457.6 L1949.2,450.4 L1960.0,442.8 L1970.6,435.0 L1981.4,427.1 L1992.4,419.5 L2003.7,412.2" stroke="#00001a" stroke-width="1.25" fill="none" opacity="0.9"/></g>
<g clip-path="url(#c4)"><path d="M2097.2,250.5 L2097.2,266.7 L2097.2,282.9 L2097.2,299.1 L2097.2,315.3 L2097.2,331.5 L2097.2,347.7 L2097.2,363.9 L2097.2,380.1 L2097.2,396.3 L2097.2,412.5 L2097.2,428.7 L2097.2,444.9 L2097.2,461.1 L2097.2,477.3 L2097.2,493.5 L2097.2,509.7 L2097.2,525.9 L2097.0,542.4 M2080.7,250.5 L2080.1,267.2 L2080.4,283.4 L2080.7,299.3 L2080.9,315.1 L2081.0,331.6 L2080.6,348.7 L2080.2,364.8 L2080.7,380.5 L2081.2,396.7 L2081.6,413.0 L2081.6,429.3 L2081.1,445.2 L2080.6,460.9 L2080.2,476.9 L2080.3,492.7 L2080.6,509.2 L2080.7,525.9 L2080.8,542.3 M2064.2,250.5 L2064.0,267.2 L2063.6,284.8 L2063.5,300.7 L2064.9,316.9 L2066.3,335.5 L2063.5,352.3 L2060.6,368.3 L2061.6,382.5 L2064.6,397.0 L2065.4,413.0 L2063.2,426.5 L2062.7,439.3 L2065.3,454.4 L2066.6,472.5 L2063.9,492.0 L2064.2,508.9 L2064.2,525.9 L2064.6,542.1 M2047.7,250.5 L2048.0,267.1 L2048.1,284.6 L2047.3,301.1 L2050.2,317.7 L2049.7,333.5 L2046.7,348.4 L2044.0,364.2 L2042.7,380.6 L2047.6,396.5 L2046.8,412.2 L2041.6,426.3 L2045.0,441.5 L2049.5,457.1 L2052.2,473.8 L2048.8,492.8 L2047.7,509.7 L2047.8,525.7 L2048.2,541.8 M2031.2,250.5 L2031.7,266.9 L2032.6,283.7 L2031.7,300.4 L2034.2,315.8 L2033.4,330.3 L2030.0,344.8 L2027.5,359.9 L2026.6,376.8 L2031.3,395.6 L2029.1,412.7 L2024.0,430.6 L2027.9,446.1 L2032.3,461.5 L2033.1,477.3 L2031.2,493.5 L2031.5,509.6 L2031.9,525.3 L2031.9,541.6 M2014.7,250.5 L2015.2,266.7 L2016.3,282.8 L2015.9,299.3 L2016.0,315.0 L2016.9,328.0 L2014.1,341.9 L2011.5,357.3 L2012.4,376.1 L2015.1,394.9 L2014.4,412.5 L2009.3,433.5 L2012.5,449.0 L2014.9,462.3 L2014.7,477.3 L2015.4,493.8 L2015.9,509.9 L2016.2,525.9 L2015.4,541.8 M1998.2,250.5 L1998.7,266.5 L1999.3,282.4 L1999.2,298.6 L1998.9,315.1 L1998.5,331.1 L1997.9,345.8 L1997.3,362.0 L1998.0,378.5 L1998.3,394.9 L1998.2,412.2 L1997.5,429.7 L1997.8,445.7 L1998.2,461.1 L1998.2,478.1 L1998.3,493.9 L1999.5,510.2 L1999.6,526.2 L1998.9,542.0 M1981.7,250.5 L1982.2,266.3 L1982.4,282.5 L1982.0,298.9 L1982.0,315.2 L1982.3,331.7 L1982.4,348.2 L1982.2,364.2 L1982.0,379.9 L1981.7,395.9 L1981.6,412.4 L1981.6,428.8 L1981.7,444.9 L1981.2,461.9 L1980.7,478.3 L1981.1,493.9 L1981.8,509.6 L1982.2,525.7 L1982.1,541.7 M1965.2,250.5 L1965.6,266.2 L1965.5,282.8 L1965.0,299.5 L1964.9,315.7 L1965.3,331.8 L1965.5,347.9 L1965.4,364.0 L1965.2,380.1 L1965.2,396.3 L1965.2,412.5 L1965.1,428.7 L1964.9,445.3 L1964.8,462.5 L1964.8,478.7 L1964.6,493.9 L1964.5,509.0 L1964.5,524.8 L1964.6,541.0 M1948.7,250.5 L1948.8,266.3 L1948.7,282.9 L1948.7,299.1 L1948.7,315.3 L1948.7,331.5 L1948.7,347.7 L1949.0,364.0 L1949.3,380.3 L1949.3,396.4 L1948.8,412.2 L1948.2,428.0 L1948.1,444.4 L1948.8,461.5 L1949.3,478.3 L1949.0,494.0 L1948.2,509.1 L1947.3,524.4 L1947.0,540.5 M1932.2,250.5 L1932.2,266.7 L1932.2,282.9 L1932.0,299.2 L1931.8,315.8 L1931.8,332.3 L1932.1,348.4 L1933.0,364.2 L1933.7,380.2 L1933.7,396.1 L1932.9,411.8 L1932.0,427.4 L1931.9,443.4 L1932.5,460.3 L1933.3,477.5 L1933.4,494.2 L1932.5,509.9 L1931.2,525.1 L1930.2,540.7 M1915.6,250.9 L1915.2,266.6 L1914.8,282.4 L1914.6,298.7 L1914.8,315.8 L1915.1,332.7 L1915.4,348.7 L1915.7,364.1 L1916.1,379.5 L1916.3,395.4 L1916.3,411.5 L1916.1,427.5 L1916.0,443.5 L1916.3,459.9 L1916.8,477.0 L1917.1,494.2 L1916.7,510.8 L1915.6,526.5 L1914.5,541.7 M2097.2,250.5 L2080.7,250.5 L2064.2,250.5 L2047.7,250.5 L2031.2,250.5 L2014.7,250.5 L1998.2,250.5 L1981.7,250.5 L1965.2,250.5 L1948.7,250.5 L1932.2,250.5 L1915.6,250.9 M2097.2,266.7 L2080.1,267.2 L2064.0,267.2 L2048.0,267.1 L2031.7,266.9 L2015.2,266.7 L1998.7,266.5 L1982.2,266.3 L1965.6,266.2 L1948.8,266.3 L1932.2,266.7 L1915.2,266.6 M2097.2,282.9 L2080.4,283.4 L2063.6,284.8 L2048.1,284.6 L2032.6,283.7 L2016.3,282.8 L1999.3,282.4 L1982.4,282.5 L1965.5,282.8 L1948.7,282.9 L1932.2,282.9 L1914.8,282.4 M2097.2,299.1 L2080.7,299.3 L2063.5,300.7 L2047.3,301.1 L2031.7,300.4 L2015.9,299.3 L1999.2,298.6 L1982.0,298.9 L1965.0,299.5 L1948.7,299.1 L1932.0,299.2 L1914.6,298.7 M2097.2,315.3 L2080.9,315.1 L2064.9,316.9 L2050.2,317.7 L2034.2,315.8 L2016.0,315.0 L1998.9,315.1 L1982.0,315.2 L1964.9,315.7 L1948.7,315.3 L1931.8,315.8 L1914.8,315.8 M2097.2,331.5 L2081.0,331.6 L2066.3,335.5 L2049.7,333.5 L2033.4,330.3 L2016.9,328.0 L1998.5,331.1 L1982.3,331.7 L1965.3,331.8 L1948.7,331.5 L1931.8,332.3 L1915.1,332.7 M2097.2,347.7 L2080.6,348.7 L2063.5,352.3 L2046.7,348.4 L2030.0,344.8 L2014.1,341.9 L1997.9,345.8 L1982.4,348.2 L1965.5,347.9 L1948.7,347.7 L1932.1,348.4 L1915.4,348.7 M2097.2,363.9 L2080.2,364.8 L2060.6,368.3 L2044.0,364.2 L2027.5,359.9 L2011.5,357.3 L1997.3,362.0 L1982.2,364.2 L1965.4,364.0 L1949.0,364.0 L1933.0,364.2 L1915.7,364.1 M2097.2,380.1 L2080.7,380.5 L2061.6,382.5 L2042.7,380.6 L2026.6,376.8 L2012.4,376.1 L1998.0,378.5 L1982.0,379.9 L1965.2,380.1 L1949.3,380.3 L1933.7,380.2 L1916.1,379.5 M2097.2,396.3 L2081.2,396.7 L2064.6,397.0 L2047.6,396.5 L2031.3,395.6 L2015.1,394.9 L1998.3,394.9 L1981.7,395.9 L1965.2,396.3 L1949.3,396.4 L1933.7,396.1 L1916.3,395.4 M2097.2,412.5 L2081.6,413.0 L2065.4,413.0 L2046.8,412.2 L2029.1,412.7 L2014.4,412.5 L1998.2,412.2 L1981.6,412.4 L1965.2,412.5 L1948.8,412.2 L1932.9,411.8 L1916.3,411.5 M2097.2,428.7 L2081.6,429.3 L2063.2,426.5 L2041.6,426.3 L2024.0,430.6 L2009.3,433.5 L1997.5,429.7 L1981.6,428.8 L1965.1,428.7 L1948.2,428.0 L1932.0,427.4 L1916.1,427.5 M2097.2,444.9 L2081.1,445.2 L2062.7,439.3 L2045.0,441.5 L2027.9,446.1 L2012.5,449.0 L1997.8,445.7 L1981.7,444.9 L1964.9,445.3 L1948.1,444.4 L1931.9,443.4 L1916.0,443.5 M2097.2,461.1 L2080.6,460.9 L2065.3,454.4 L2049.5,457.1 L2032.3,461.5 L2014.9,462.3 L1998.2,461.1 L1981.2,461.9 L1964.8,462.5 L1948.8,461.5 L1932.5,460.3 L1916.3,459.9 M2097.2,477.3 L2080.2,476.9 L2066.6,472.5 L2052.2,473.8 L2033.1,477.3 L2014.7,477.3 L1998.2,478.1 L1980.7,478.3 L1964.8,478.7 L1949.3,478.3 L1933.3,477.5 L1916.8,477.0 M2097.2,493.5 L2080.3,492.7 L2063.9,492.0 L2048.8,492.8 L2031.2,493.5 L2015.4,493.8 L1998.3,493.9 L1981.1,493.9 L1964.6,493.9 L1949.0,494.0 L1933.4,494.2 L1917.1,494.2 M2097.2,509.7 L2080.6,509.2 L2064.2,508.9 L2047.7,509.7 L2031.5,509.6 L2015.9,509.9 L1999.5,510.2 L1981.8,509.6 L1964.5,509.0 L1948.2,509.1 L1932.5,509.9 L1916.7,510.8 M2097.2,525.9 L2080.7,525.9 L2064.2,525.9 L2047.8,525.7 L2031.9,525.3 L2016.2,525.9 L1999.6,526.2 L1982.2,525.7 L1964.5,524.8 L1947.3,524.4 L1931.2,525.1 L1915.6,526.5 M2097.0,542.4 L2080.8,542.3 L2064.6,542.1 L2048.2,541.8 L2031.9,541.6 L2015.4,541.8 L1998.9,542.0 L1982.1,541.7 L1964.6,541.0 L1947.0,540.5 L1930.2,540.7 L1914.5,541.7" stroke="#00001a" stroke-width="1.25" fill="none" opacity="0.9"/></g>
</g>
<polygon points="1304.0,446.0 1670.7,446.0 1805.2,361.2 1931.6,250.6 2097.2,250.5 2097.2,525.0 2058.0,525.0 1731.5,732.4 1568.6,721.6 1304.0,722.0" fill="none" stroke="#000" stroke-width="1.2" opacity="0.9"/>
<polygon points="1570.0,705.8 1726.2,716.9 1731.3,732.6 1568.6,722.0" fill="none" stroke="#ff1a3a" stroke-width="1.7"/>
<rect x="1199" y="-3" width="17" height="10.5" fill="#f8faff" stroke="#4a78c8" stroke-width="1"/>
<path d="M1202,1.5 H1213 Q1212,6 1207.5,6 Q1203,6 1202,1.5 Z" fill="#3a2aa0"/>
<text x="1220.80" y="5.00" font-size="16" fill="#1e2a3a" textLength="84.22" lengthAdjust="spacingAndGlyphs">Viewport: 2</text>
<text x="1329.64" y="5.00" font-size="16" fill="#1e2a3a" textLength="87.36" lengthAdjust="spacingAndGlyphs">Overlay Plot</text>
<rect x="1215.5" y="32" width="189" height="301" fill="none" stroke="#d4d8e0" stroke-width="2"/>
<text x="1231.98" y="68.00" font-size="17" fill="#e4e8ee" stroke="#1f2d47" stroke-width="0.3" textLength="47.26" lengthAdjust="spacingAndGlyphs">TEMP</text>
<text x="1231.18" y="89.20" font-size="17" fill="#e4e8ee" stroke="#1f2d47" stroke-width="0.3" textLength="105.18" lengthAdjust="spacingAndGlyphs">(Avg: 75%)</text>
<rect x="1233" y="106.2" width="26.3" height="17.51" fill="rgb(255, 0, 0)"/>
<rect x="1233" y="123.7" width="26.3" height="17.51" fill="rgb(255, 93, 0)"/>
<rect x="1233" y="141.2" width="26.3" height="17.51" fill="rgb(255, 185, 0)"/>
<rect x="1233" y="158.7" width="26.3" height="17.51" fill="rgb(232, 255, 0)"/>
<rect x="1233" y="176.2" width="26.3" height="17.51" fill="rgb(139, 255, 0)"/>
<rect x="1233" y="193.7" width="26.3" height="17.51" fill="rgb(46, 255, 0)"/>
<rect x="1233" y="211.2" width="26.3" height="17.51" fill="rgb(0, 255, 46)"/>
<rect x="1233" y="228.8" width="26.3" height="17.51" fill="rgb(0, 255, 139)"/>
<rect x="1233" y="246.3" width="26.3" height="17.51" fill="rgb(0, 255, 232)"/>
<rect x="1233" y="263.8" width="26.3" height="17.51" fill="rgb(0, 185, 255)"/>
<rect x="1233" y="281.3" width="26.3" height="17.51" fill="rgb(0, 93, 255)"/>
<rect x="1233" y="298.8" width="26.3" height="17.51" fill="rgb(0, 0, 255)"/>
<rect x="1233" y="106.2" width="26.3" height="210.1" fill="none" stroke="#e0e4ea" stroke-width="1.5"/>
<path d="M1233,106.2 H1267.7 M1233,123.7 H1267.7 M1233,141.2 H1267.7 M1233,158.7 H1267.7 M1233,176.2 H1267.7 M1233,193.7 H1267.7 M1233,211.2 H1267.7 M1233,228.8 H1267.7 M1233,246.3 H1267.7 M1233,263.8 H1267.7 M1233,281.3 H1267.7 M1233,298.8 H1267.7 M1233,316.3 H1267.7" stroke="#e0e4ea" stroke-width="1.5"/>
<text x="1276.64" y="112.00" font-size="17" fill="#e4e8ee" stroke="#21304a" stroke-width="0.3" textLength="110.38" lengthAdjust="spacingAndGlyphs">+4.936e+02</text>
<text x="1276.64" y="129.51" font-size="17" fill="#e4e8ee" stroke="#21304a" stroke-width="0.3" textLength="110.38" lengthAdjust="spacingAndGlyphs">+4.772e+02</text>
<text x="1276.64" y="147.02" font-size="17" fill="#e4e8ee" stroke="#21304a" stroke-width="0.3" textLength="110.38" lengthAdjust="spacingAndGlyphs">+4.608e+02</text>
<text x="1276.64" y="164.53" font-size="17" fill="#e4e8ee" stroke="#21304a" stroke-width="0.3" textLength="110.38" lengthAdjust="spacingAndGlyphs">+4.444e+02</text>
<text x="1276.64" y="182.03" font-size="17" fill="#e4e8ee" stroke="#21304a" stroke-width="0.3" textLength="110.38" lengthAdjust="spacingAndGlyphs">+4.280e+02</text>
<text x="1276.64" y="199.54" font-size="17" fill="#e4e8ee" stroke="#21304a" stroke-width="0.3" textLength="110.38" lengthAdjust="spacingAndGlyphs">+4.116e+02</text>
<text x="1276.64" y="217.05" font-size="17" fill="#e4e8ee" stroke="#21304a" stroke-width="0.3" textLength="110.38" lengthAdjust="spacingAndGlyphs">+3.952e+02</text>
<text x="1276.64" y="234.56" font-size="17" fill="#e4e8ee" stroke="#21304a" stroke-width="0.3" textLength="110.38" lengthAdjust="spacingAndGlyphs">+3.788e+02</text>
<text x="1276.64" y="252.07" font-size="17" fill="#e4e8ee" stroke="#21304a" stroke-width="0.3" textLength="110.38" lengthAdjust="spacingAndGlyphs">+3.624e+02</text>
<text x="1276.64" y="269.58" font-size="17" fill="#e4e8ee" stroke="#21304a" stroke-width="0.3" textLength="110.38" lengthAdjust="spacingAndGlyphs">+3.460e+02</text>
<text x="1276.64" y="287.08" font-size="17" fill="#e4e8ee" stroke="#21304a" stroke-width="0.3" textLength="110.38" lengthAdjust="spacingAndGlyphs">+3.296e+02</text>
<text x="1276.64" y="304.59" font-size="17" fill="#e4e8ee" stroke="#21304a" stroke-width="0.3" textLength="110.38" lengthAdjust="spacingAndGlyphs">+3.132e+02</text>
<text x="1276.64" y="322.10" font-size="17" fill="#e4e8ee" stroke="#21304a" stroke-width="0.3" textLength="110.38" lengthAdjust="spacingAndGlyphs">+2.968e+02</text>
</svg></body></html>
